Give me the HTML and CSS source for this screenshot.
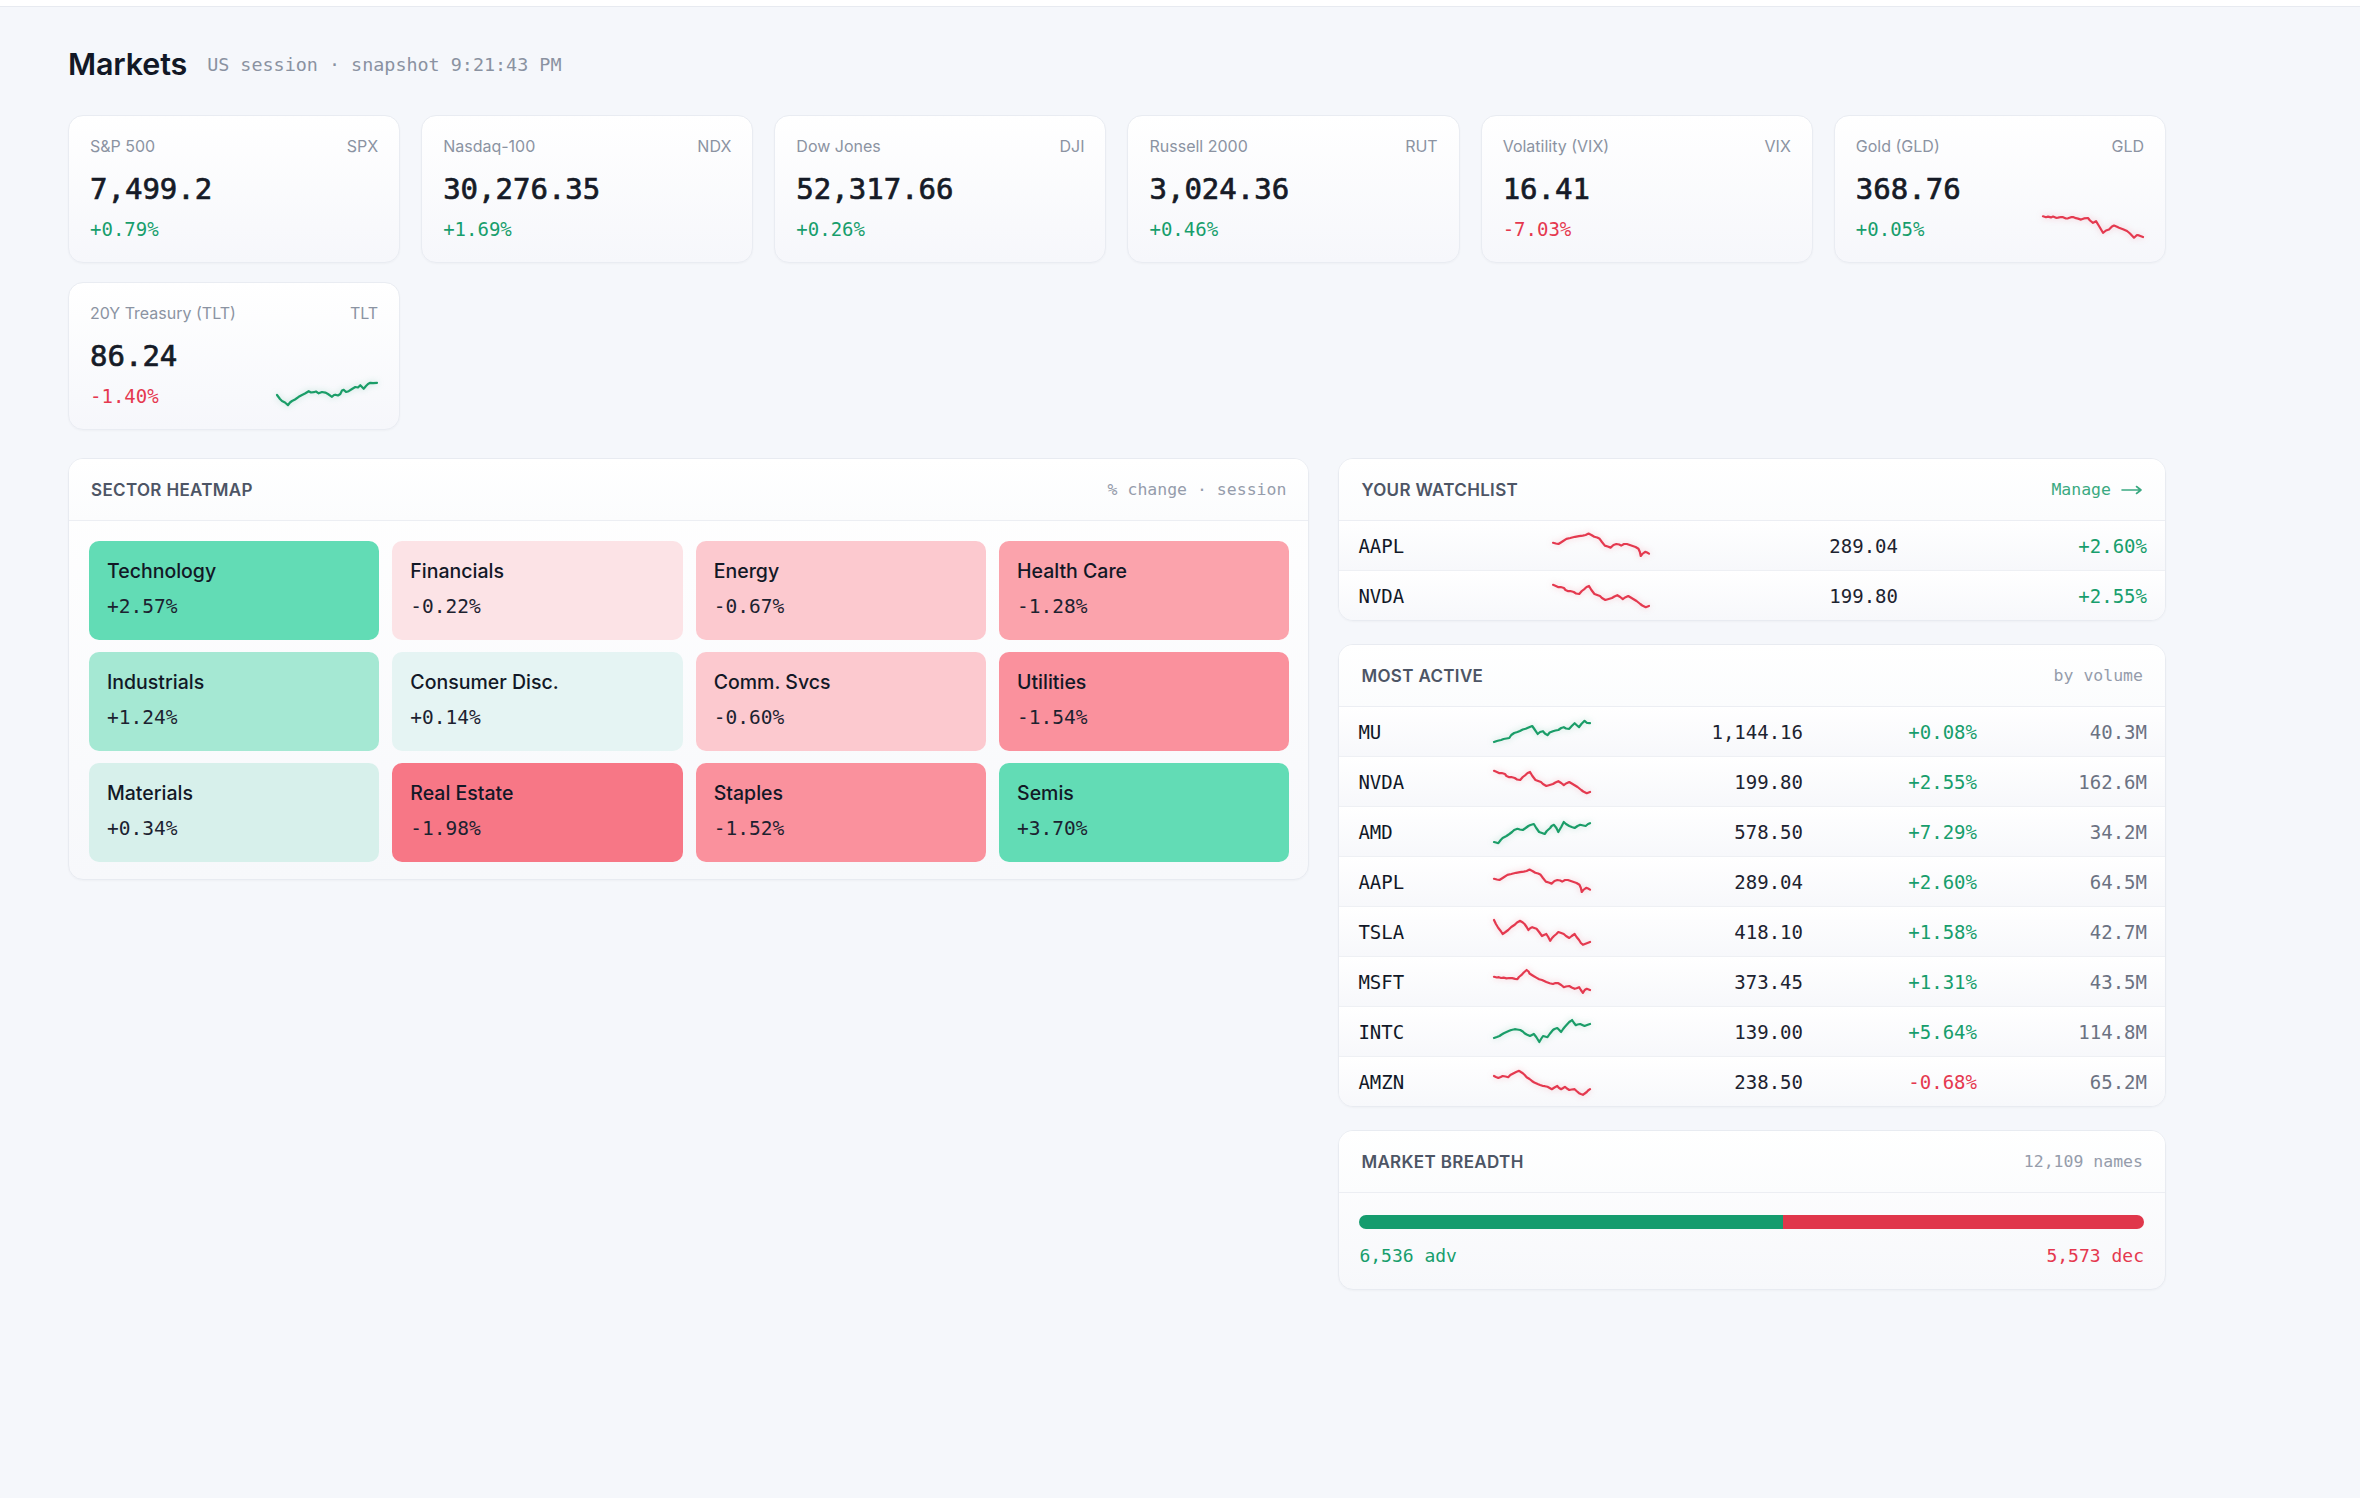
FILE: index.html
```html
<!DOCTYPE html>
<html lang="en">
<head>
<meta charset="utf-8">
<title>Markets</title>
<link rel="stylesheet" href="styles.css">
</head>
<body>
<div class="topline"></div>
<main class="app">
  <header class="page-head">
    <h1 class="title">Markets</h1>
    <span class="subtitle">US session · snapshot 9:21:43 PM</span>
  </header>

  <section class="indices">
    <div class="card">
      <div class="card-top"><span>S&amp;P 500</span><span>SPX</span></div>
      <div class="card-value">7,499.2</div>
      <div class="card-bottom"><span class="chg up">+0.79%</span></div>
    </div>
    <div class="card">
      <div class="card-top"><span>Nasdaq-100</span><span>NDX</span></div>
      <div class="card-value">30,276.35</div>
      <div class="card-bottom"><span class="chg up">+1.69%</span></div>
    </div>
    <div class="card">
      <div class="card-top"><span>Dow Jones</span><span>DJI</span></div>
      <div class="card-value">52,317.66</div>
      <div class="card-bottom"><span class="chg up">+0.26%</span></div>
    </div>
    <div class="card">
      <div class="card-top"><span>Russell 2000</span><span>RUT</span></div>
      <div class="card-value">3,024.36</div>
      <div class="card-bottom"><span class="chg up">+0.46%</span></div>
    </div>
    <div class="card">
      <div class="card-top"><span>Volatility (VIX)</span><span>VIX</span></div>
      <div class="card-value">16.41</div>
      <div class="card-bottom"><span class="chg down">-7.03%</span></div>
    </div>
    <div class="card">
      <div class="card-top"><span>Gold (GLD)</span><span>GLD</span></div>
      <div class="card-value">368.76</div>
      <div class="card-bottom"><span class="chg up">+0.05%</span>
        <svg class="spark card-spark down" viewBox="0 0 100 28" preserveAspectRatio="none"><polyline points="0,3.3 3,4.2 5,3.6 8,4.4 10,3.6 13,4.8 15,4.6 18,4 20,4.2 23,5.5 25,5.3 28,4.2 30,4 33,5.2 35,5.6 38,6.6 41,5.4 45,5 47,7.5 50,9.9 53,8.2 56,13 60,19.8 63,17.5 66,16.5 69,13.5 71,12.5 74,13.8 76,14.8 80,16.2 84,18 87,20.5 91,24.7 94,22 96,22.4 100,24"/></svg>
      </div>
    </div>
    <div class="card">
      <div class="card-top"><span>20Y Treasury (TLT)</span><span>TLT</span></div>
      <div class="card-value">86.24</div>
      <div class="card-bottom"><span class="chg down">-1.40%</span>
        <svg class="spark card-spark up" viewBox="0 0 100 28" preserveAspectRatio="none"><polyline points="0,15 3,19 5,21 8,22.5 11,25.2 13,22.5 15,21 18,19.5 21.7,16.8 25,15 28,13.5 31.7,11.2 34,12.5 36.7,12.2 39,11.5 41.7,13.3 45,12 48.3,12.6 51,14 55,16.8 57,15 58.3,14.7 61,15.5 63.3,14 65,10.5 66.7,9.8 69,12 71.7,11.2 75,9 78.3,7 81,7.5 83.3,5.25 85,7 86.7,8.75 89,6 91,4 93.3,2.8 96,3.2 100,2.8"/></svg>
      </div>
    </div>
  </section>

  <div class="main">
    <section class="panel heatmap">
      <div class="panel-head"><h2>Sector heatmap</h2><span class="meta">% change · session</span></div>
      <div class="tiles">
        <div class="tile heat-up3"><span class="tile-name">Technology</span><span class="tile-pct">+2.57%</span></div>
        <div class="tile heat-dn0"><span class="tile-name">Financials</span><span class="tile-pct">-0.22%</span></div>
        <div class="tile heat-dn1"><span class="tile-name">Energy</span><span class="tile-pct">-0.67%</span></div>
        <div class="tile heat-dn2"><span class="tile-name">Health Care</span><span class="tile-pct">-1.28%</span></div>
        <div class="tile heat-up2"><span class="tile-name">Industrials</span><span class="tile-pct">+1.24%</span></div>
        <div class="tile heat-up0"><span class="tile-name">Consumer Disc.</span><span class="tile-pct">+0.14%</span></div>
        <div class="tile heat-dn1"><span class="tile-name">Comm. Svcs</span><span class="tile-pct">-0.60%</span></div>
        <div class="tile heat-dn3"><span class="tile-name">Utilities</span><span class="tile-pct">-1.54%</span></div>
        <div class="tile heat-up1"><span class="tile-name">Materials</span><span class="tile-pct">+0.34%</span></div>
        <div class="tile heat-dn4"><span class="tile-name">Real Estate</span><span class="tile-pct">-1.98%</span></div>
        <div class="tile heat-dn3"><span class="tile-name">Staples</span><span class="tile-pct">-1.52%</span></div>
        <div class="tile heat-up3"><span class="tile-name">Semis</span><span class="tile-pct">+3.70%</span></div>
      </div>
    </section>

    <div class="side">
      <section class="panel">
        <div class="panel-head"><h2>Your watchlist</h2><a class="manage" href="#">Manage <svg class="arrow" viewBox="0 0 22 10"><path d="M1 5h19M15.5 1.5 20 5l-4.5 3.5"/></svg></a></div>
        <div class="wl-row">
          <span class="sym">AAPL</span>
          <svg class="spark down" viewBox="0 0 100 28" preserveAspectRatio="none"><polyline points="0,10.8 3,11.5 5.7,12 9,10 14,6.8 18,6 23,4.8 27,4.2 31,3.6 34,3 37,1.6 40,3 43,4.8 46,5.5 48.6,6.8 51,10 54,13.6 57,14.5 60,15.6 63,13 66,12 69,12.5 71,13.6 74,12 77,12 80,13 83,14 86,15 89,16.8 90.5,20 91.4,24 93,22 96,19.8 98,20.5 100,21.6"/></svg>
          <span class="num">289.04</span>
          <span class="num up">+2.60%</span>
        </div>
        <div class="wl-row">
          <span class="sym">NVDA</span>
          <svg class="spark down" viewBox="0 0 100 28" preserveAspectRatio="none"><polyline points="0,2.8 3,4 5.7,5.2 8,5 11.4,6 13,8 15.9,9.2 18,9 21.6,10 24,11.5 27.3,12 30,9 33,6.8 35,5 37.5,4 40,8 43.2,12 46,13 48.9,14 51,16 54.5,18 58,17 61.4,16 64,14.5 67,13.2 70,15 72.7,17.2 75,15.5 78.4,14 81,15.5 84,17.2 87,19 90.9,22 93,23.5 96.6,25.2 100,24"/></svg>
          <span class="num">199.80</span>
          <span class="num up">+2.55%</span>
        </div>
      </section>

      <section class="panel">
        <div class="panel-head"><h2>Most active</h2><span class="meta">by volume</span></div>
        <div class="ma-row">
          <span class="sym">MU</span>
          <svg class="spark up" viewBox="0 0 100 28" preserveAspectRatio="none"><polyline points="0,24 3,23 5,22.5 7.4,22 10,21 13,20.5 15.9,20 18,17 21,15 24.4,14 27,13 30,11.5 33,10.8 36,9.5 39.8,8 42,11 45.5,16 48,14 51,13.2 53,15.5 55.7,17.2 58,14.5 61.4,13.2 64,12.5 67,12 70,10 72.7,9.2 75,10.5 78.4,10.8 81,8 84,5.2 86,7 88.6,9.2 91,6 94.3,2.8 97,5 100,5.2"/></svg>
          <span class="num">1,144.16</span><span class="num up">+0.08%</span><span class="num vol">40.3M</span>
        </div>
        <div class="ma-row">
          <span class="sym">NVDA</span>
          <svg class="spark down" viewBox="0 0 100 28" preserveAspectRatio="none"><polyline points="0,2.8 3,4 5.7,5.2 8,5 11.4,6 13,8 15.9,9.2 18,9 21.6,10 24,11.5 27.3,12 30,9 33,6.8 35,5 37.5,4 40,8 43.2,12 46,13 48.9,14 51,16 54.5,18 58,17 61.4,16 64,14.5 67,13.2 70,15 72.7,17.2 75,15.5 78.4,14 81,15.5 84,17.2 87,19 90.9,22 93,23.5 96.6,25.2 100,24"/></svg>
          <span class="num">199.80</span><span class="num up">+2.55%</span><span class="num vol">162.6M</span>
        </div>
        <div class="ma-row">
          <span class="sym">AMD</span>
          <svg class="spark up" viewBox="0 0 100 28" preserveAspectRatio="none"><polyline points="0,24 2,24.5 4.5,25.2 7,22 9,20 11,19 13,18 16,16 18.8,14 21,12 24.4,10.8 27,11.5 30,12 33,10 35.8,8 38,7 41.5,6 44,10 47,14 50,15 52.8,16 55,13 58.5,10 60,8 62.5,6.8 65,10 67,14 70,9 72.7,4 75,6 78.4,8 81,9 84,10 87,8 89.8,6.8 93,7.5 95.5,8 98,6 100,5.2"/></svg>
          <span class="num">578.50</span><span class="num up">+7.29%</span><span class="num vol">34.2M</span>
        </div>
        <div class="ma-row">
          <span class="sym">AAPL</span>
          <svg class="spark down" viewBox="0 0 100 28" preserveAspectRatio="none"><polyline points="0,10.8 3,11.5 5.7,12 9,10 14,6.8 18,6 23,4.8 27,4.2 31,3.6 34,3 37,1.6 40,3 43,4.8 46,5.5 48.6,6.8 51,10 54,13.6 57,14.5 60,15.6 63,13 66,12 69,12.5 71,13.6 74,12 77,12 80,13 83,14 86,15 89,16.8 90.5,20 91.4,24 93,22 96,19.8 98,20.5 100,21.6"/></svg>
          <span class="num">289.04</span><span class="num up">+2.60%</span><span class="num vol">64.5M</span>
        </div>
        <div class="ma-row">
          <span class="sym">TSLA</span>
          <svg class="spark down" viewBox="0 0 100 28" preserveAspectRatio="none"><polyline points="0,2 2,6 4.5,10 7,13 9,16 12,14 14.8,12 18,9 21.6,6.8 24,4.5 27.3,2.8 30,4.5 31.8,6 34,9 35.8,12 38,10 39.8,9.2 42,10 44.3,10.8 47,14 50,18 52,17 54.5,16 56.5,19 58.5,22.8 60.5,20 62.5,18 65,16 67,14 70,15 72.7,16 75,18 78.4,20 81,18 84,16 86,19 88.6,22 90.5,25 92.6,26.8 96,25.5 100,24"/></svg>
          <span class="num">418.10</span><span class="num up">+1.58%</span><span class="num vol">42.7M</span>
        </div>
        <div class="ma-row">
          <span class="sym">MSFT</span>
          <svg class="spark down" viewBox="0 0 100 28" preserveAspectRatio="none"><polyline points="0,8.8 3,9.5 5,9.2 7.4,10 10,9.6 13,10.4 15.9,10 19,10.2 22,10.8 24.4,11.2 26,9 28.4,7.2 31,4.5 34,2 36,3.5 37,5.5 39.8,7.2 42,8.5 44,9.6 47,11.2 50,12 54.5,14 58,15.2 61.4,16 64,15 67,15.2 70,17 72.7,19.2 75,18.5 78.4,18 81,19.5 84,20.8 86,20.2 88.6,19.2 90.5,22 92.6,24.8 94.5,22 96.6,20.8 100,22"/></svg>
          <span class="num">373.45</span><span class="num up">+1.31%</span><span class="num vol">43.5M</span>
        </div>
        <div class="ma-row">
          <span class="sym">INTC</span>
          <svg class="spark up" viewBox="0 0 100 28" preserveAspectRatio="none"><polyline points="0,20 3,19 5.7,18 8,16.5 10.2,15.2 13,14 15.9,12.8 18,12 21.6,11.2 24,11.5 27.3,12 30,13.5 31.8,15.2 34,16.5 37.5,18 39.5,17 41.5,16 44,19 47.2,24 49,21 51.1,18 53,18.5 55.7,19.2 58,16 61.4,12 63,11 65.9,10 68,12 69.9,14 72,11 73.9,8.8 76,6.5 78.4,4 80,3 81.3,2 83,4.5 85.2,7.2 87,6.5 89.8,6 92,7 94.3,8 97,7 100,6"/></svg>
          <span class="num">139.00</span><span class="num up">+5.64%</span><span class="num vol">114.8M</span>
        </div>
        <div class="ma-row">
          <span class="sym">AMZN</span>
          <svg class="spark down" viewBox="0 0 100 28" preserveAspectRatio="none"><polyline points="0,8 2,9 4.5,10 7,9 9,8 12,8.5 14.8,9.2 17,7 20.5,5.2 23,4 26.1,2.8 28,4 30,5.2 32,7 34,9.2 37,11 39.8,13.2 42,14.5 45.5,16 48,17 51.1,18 53,18.2 55.7,18.8 58,20 60.2,21.2 63,19.5 65.9,18 67.5,19.8 69.9,21.2 72,20 73.9,18.8 76,20.5 78.4,22 81,21.5 84,21.2 86,23 88.6,25.2 90.5,26 92.6,26.8 94.5,25.5 96.6,24 98,22.5 100,21.2"/></svg>
          <span class="num">238.50</span><span class="num down">-0.68%</span><span class="num vol">65.2M</span>
        </div>
      </section>

      <section class="panel">
        <div class="panel-head"><h2>Market breadth</h2><span class="meta">12,109 names</span></div>
        <div class="breadth">
          <div class="bar"><div class="bar-adv" style="width:53.98%"></div><div class="bar-dec"></div></div>
          <div class="breadth-legend"><span class="up">6,536 adv</span><span class="down">5,573 dec</span></div>
        </div>
      </section>
    </div>
  </div>
</main>
</body>
</html>
```

FILE: styles.css
```css
* { box-sizing: border-box; }

html, body { margin: 0; padding: 0; }

body {
  background: #f5f7fb;
  font-family: Inter, "Noto Sans", "Liberation Sans", sans-serif;
  color: #111827;
  min-height: 1498px;
}

.topline {
  height: 7px;
  background: #ffffff;
  border-bottom: 1px solid #e7eaf0;
}

.app {
  box-sizing: content-box;
  max-width: 2098px;
  padding: 39px 68px 60px;
}

/* ---------- page header ---------- */
.page-head {
  display: flex;
  align-items: center;
  gap: 20px;
  height: 36px;
  margin-bottom: 33px;
}

.title {
  margin: 0;
  font-size: 30.5px;
  line-height: 36px;
  font-weight: 600;
  letter-spacing: -0.005em;
  color: #121826;
}

.subtitle {
  font-family: "DejaVu Sans Mono", monospace;
  font-size: 18.4px;
  color: #8a92a1;
}

/* ---------- index cards ---------- */
.indices {
  display: grid;
  grid-template-columns: repeat(6, 1fr);
  gap: 19px 21px;
}

.card {
  border: 1px solid #e9ecf2;
  border-radius: 15px;
  background: linear-gradient(180deg, #ffffff 0%, #f6f7fb 100%);
  padding: 20px 21px 21px;
  box-shadow: 0 1px 2px rgba(15, 23, 42, 0.03);
}

.card-top {
  display: flex;
  justify-content: space-between;
  font-size: 16px;
  line-height: 20px;
  color: #8b93a2;
}

.card-value {
  margin-top: 15px;
  font-family: "DejaVu Sans Mono", monospace;
  font-size: 29px;
  line-height: 36px;
  font-weight: 400;
  -webkit-text-stroke: 0.7px #161b27;
  color: #161b27;
}

.card-bottom {
  display: flex;
  justify-content: space-between;
  align-items: flex-end;
  height: 24px;
  margin-top: 10px;
}

.chg {
  font-family: "DejaVu Sans Mono", monospace;
  font-size: 19px;
  line-height: 24px;
}

.up { color: #179e6c; }
.down { color: #e5384f; }

/* ---------- sparklines ---------- */
.spark {
  display: block;
  width: 96px;
  height: 28px;
  overflow: visible;
}

.spark polyline {
  fill: none;
  stroke-width: 2.2;
  stroke-linejoin: round;
  stroke-linecap: round;
  vector-effect: non-scaling-stroke;
}

.spark.up polyline { stroke: #1a9d68; }
.spark.down polyline { stroke: #e4394f; }
.spark.up { filter: drop-shadow(0 0 3px rgba(26, 157, 104, 0.28)); }
.spark.down { filter: drop-shadow(0 0 3px rgba(228, 57, 79, 0.28)); }

.card-spark {
  width: 100px;
  height: 28px;
  flex: none;
  margin-right: 1px;
}

/* ---------- main grid ---------- */
.main {
  display: grid;
  grid-template-columns: 3fr 2fr;
  gap: 29px;
  align-items: start;
  margin-top: 28px;
}

.side {
  display: flex;
  flex-direction: column;
  gap: 23px;
}

.panel {
  border: 1px solid #e8ebf1;
  border-radius: 15px;
  background: linear-gradient(180deg, #ffffff 0%, #f7f8fb 100%);
  overflow: hidden;
  box-shadow: 0 1px 2px rgba(15, 23, 42, 0.03);
}

.panel-head {
  display: flex;
  align-items: center;
  justify-content: space-between;
  height: 62px;
  padding: 0 22px;
  border-bottom: 1px solid #eceef3;
  background: linear-gradient(180deg, #ffffff 0%, #fbfcfd 100%);
}

.panel-head h2 {
  margin: 0;
  font-size: 17px;
  font-weight: 600;
  letter-spacing: 0.02em;
  text-transform: uppercase;
  color: #4d5565;
}

.meta {
  font-family: "DejaVu Sans Mono", monospace;
  font-size: 16.5px;
  color: #959cab;
}

.manage {
  display: flex;
  align-items: center;
  gap: 10px;
  font-family: "DejaVu Sans Mono", monospace;
  font-size: 16.5px;
  color: #3aa981;
  text-decoration: none;
}

.arrow {
  width: 22px;
  height: 10px;
  fill: none;
  stroke: currentColor;
  stroke-width: 1.6;
  stroke-linecap: round;
  stroke-linejoin: round;
}

/* ---------- heatmap ---------- */
.tiles {
  display: grid;
  grid-template-columns: repeat(4, 1fr);
  gap: 12px 13px;
  padding: 20px 19px 17px 20px;
}

.tile {
  display: flex;
  flex-direction: column;
  gap: 12px;
  height: 99px;
  padding: 18px 18px;
  border-radius: 10px;
}

.tile-name {
  font-size: 19.5px;
  line-height: 24px;
  font-weight: 500;
  color: #121826;
}

.tile-pct {
  font-family: "DejaVu Sans Mono", monospace;
  font-size: 19.5px;
  line-height: 24px;
  color: #1c2230;
}

.heat-up3 { background: #62dcb5; }
.heat-up2 { background: #a5e8d3; }
.heat-up1 { background: #d7f0eb; }
.heat-up0 { background: #e5f4f3; }
.heat-dn0 { background: #fce3e6; }
.heat-dn1 { background: #fcc9cf; }
.heat-dn2 { background: #fba3ac; }
.heat-dn3 { background: #fa919d; }
.heat-dn4 { background: #f77786; }

/* ---------- tables ---------- */
.wl-row,
.ma-row {
  display: grid;
  align-items: center;
  height: 50px;
  padding: 0 18px 0 19px;
  border-bottom: 1px solid #eef0f4;
  background: linear-gradient(180deg, #ffffff 0%, #f7f8fb 100%);
  font-family: "DejaVu Sans Mono", monospace;
  font-size: 19px;
}

.wl-row:last-child,
.ma-row:last-child {
  border-bottom: none;
  height: 49px;
}

.wl-row { grid-template-columns: 195px 96px 1fr 249px; }
.ma-row { grid-template-columns: 136px 96px 1fr 174px 170px; }

.sym { color: #111827; }
.num { text-align: right; color: #1d2330; }
.num.up { color: #179e6c; }
.num.down { color: #e5384f; }
.num.vol { color: #6b7282; }

/* ---------- breadth ---------- */
.breadth {
  padding: 22px 21px 22px 20px;
}

.bar {
  display: flex;
  height: 14px;
  border-radius: 7px;
  overflow: hidden;
}

.bar-adv { background: #159c6e; }
.bar-dec { flex: 1; background: #e0374b; }

.breadth-legend {
  display: flex;
  justify-content: space-between;
  margin-top: 16px;
  font-family: "DejaVu Sans Mono", monospace;
  font-size: 18px;
  line-height: 22px;
}
```
